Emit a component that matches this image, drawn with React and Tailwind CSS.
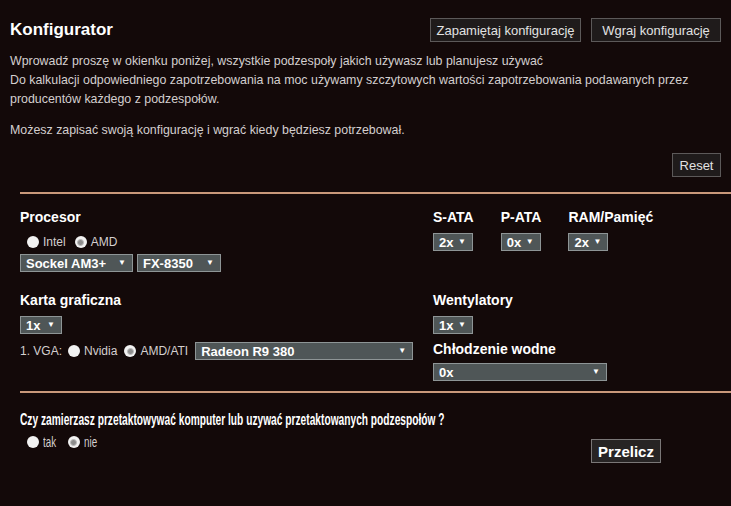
import React from "react";

const Radio = ({ checked }) => (
  <span className="inline-flex w-[12px] h-[12px] rounded-full bg-[#f2f2f2] items-center justify-center shrink-0">
    {checked && <span className="w-[7px] h-[7px] rounded-full bg-[#8d8d8d] border border-[#bdbdbd]" />}
  </span>
);

const Select = ({ value, width }) => (
  <div
    className={`flex items-center justify-between h-[18px] bg-[#4f5657] border border-[#8e9596] pl-[5px] pr-[6px] text-white font-bold text-[13px] leading-none ${width}`}
  >
    <span>{value}</span>
    <span className="text-[8px] text-white">▼</span>
  </div>
);

const Button = ({ children, className = "" }) => (
  <button
    className={`h-[24px] whitespace-nowrap bg-[#1f1b1b] border border-[#5c5959] text-[#e2e2e2] text-[13px] leading-none ${className}`}
  >
    {children}
  </button>
);

const Label = ({ children }) => (
  <div className="text-white font-bold text-[14px] leading-[16px]">{children}</div>
);

const Divider = () => <div className="ml-[20px] h-[2px] bg-[#c9987a]" />;

export default function App() {
  return (
    <div
      className="w-[731px] h-[506px] overflow-hidden bg-[#130909] text-[#d4cfcf]"
      style={{ fontFamily: '"Liberation Sans", Arial, sans-serif' }}
    >
      <div className="px-[10px] pt-[18px]">
        <div className="flex items-center justify-between">
          <h1 className="text-white font-bold text-[17px] leading-[24px]">Konfigurator</h1>
          <div className="flex gap-[10px]">
            <Button className="w-[151px]">Zapamiętaj konfigurację</Button>
            <Button className="w-[130px]">Wgraj konfigurację</Button>
          </div>
        </div>
        <div className="mt-[10px] text-[12.4px] leading-[19px]">
          <p>Wprowadź proszę w okienku poniżej, wszystkie podzespoły jakich używasz lub planujesz używać</p>
          <p>
            Do kalkulacji odpowiedniego zapotrzebowania na moc używamy szczytowych wartości zapotrzebowania podawanych przez
            <br />
            producentów każdego z podzespołów.
          </p>
          <p className="mt-[12px]">Możesz zapisać swoją konfigurację i wgrać kiedy będziesz potrzebował.</p>
        </div>
        <div className="flex justify-end mt-[13px]">
          <Button className="w-[49px]">Reset</Button>
        </div>
      </div>

      <div className="mt-[15px]">
        <Divider />
      </div>

      <div className="pl-[20px] pt-[15px] grid grid-cols-[413px_1fr] gap-y-[20px]">
        <div>
          <Label>Procesor</Label>
          <div className="flex items-center h-[16px] mt-[9px] pl-[7px] gap-[4px] text-[12px]">
            <Radio />
            <span className="mr-[5px]">Intel</span>
            <Radio checked />
            <span>AMD</span>
          </div>
          <div className="flex gap-[4px] mt-[4px]">
            <Select value="Sockel AM3+" width="w-[113px]" />
            <Select value="FX-8350" width="w-[84px]" />
          </div>
        </div>
        <div className="flex gap-[27px]">
          <div>
            <Label>S-ATA</Label>
            <div className="mt-[8px]">
              <Select value="2x" width="w-[40px]" />
            </div>
          </div>
          <div>
            <Label>P-ATA</Label>
            <div className="mt-[8px]">
              <Select value="0x" width="w-[40px]" />
            </div>
          </div>
          <div>
            <Label>RAM/Pamięć</Label>
            <div className="mt-[8px]">
              <Select value="2x" width="w-[40px]" />
            </div>
          </div>
        </div>

        <div>
          <Label>Karta graficzna</Label>
          <div className="mt-[8px]">
            <Select value="1x" width="w-[42px]" />
          </div>
          <div className="flex items-center mt-[8px] gap-[4px] text-[12px]">
            <span className="mr-[2px]">1. VGA:</span>
            <Radio />
            <span className="mr-[3px]">Nvidia</span>
            <Radio checked />
            <span className="mr-[3px]">AMD/ATI</span>
            <Select value="Radeon R9 380" width="w-[218px]" />
          </div>
        </div>
        <div>
          <Label>Wentylatory</Label>
          <div className="mt-[8px]">
            <Select value="1x" width="w-[40px]" />
          </div>
          <div className="mt-[7px]">
            <Label>Chłodzenie wodne</Label>
          </div>
          <div className="mt-[6px]">
            <Select value="0x" width="w-[174px]" />
          </div>
        </div>
      </div>

      <div className="mt-[10px]">
        <Divider />
      </div>

      <div className="pl-[20px] pt-[15px]">
        <div className="h-[18px]">
          <span className="inline-block whitespace-nowrap origin-left scale-x-[0.6] text-white font-bold text-[17px] leading-[18px]">
            Czy zamierzasz przetaktowywać komputer lub uzywać przetaktowanych podzespołów ?
          </span>
        </div>
        <div className="flex items-start mt-[8px] pr-[70px]">
          <div className="flex items-center gap-[4px] pl-[7px] h-[16px]">
            <Radio />
            <span className="inline-block origin-left scale-x-[0.7] text-[14px] mr-[2px]">tak</span>
            <Radio checked />
            <span className="inline-block origin-left scale-x-[0.7] text-[14px]">nie</span>
          </div>
          <button className="ml-auto mt-[5px] h-[24px] w-[70px] bg-[#272424] border border-[#7a7777] text-white font-bold text-[15px] leading-none">
            Przelicz
          </button>
        </div>
      </div>
    </div>
  );
}
